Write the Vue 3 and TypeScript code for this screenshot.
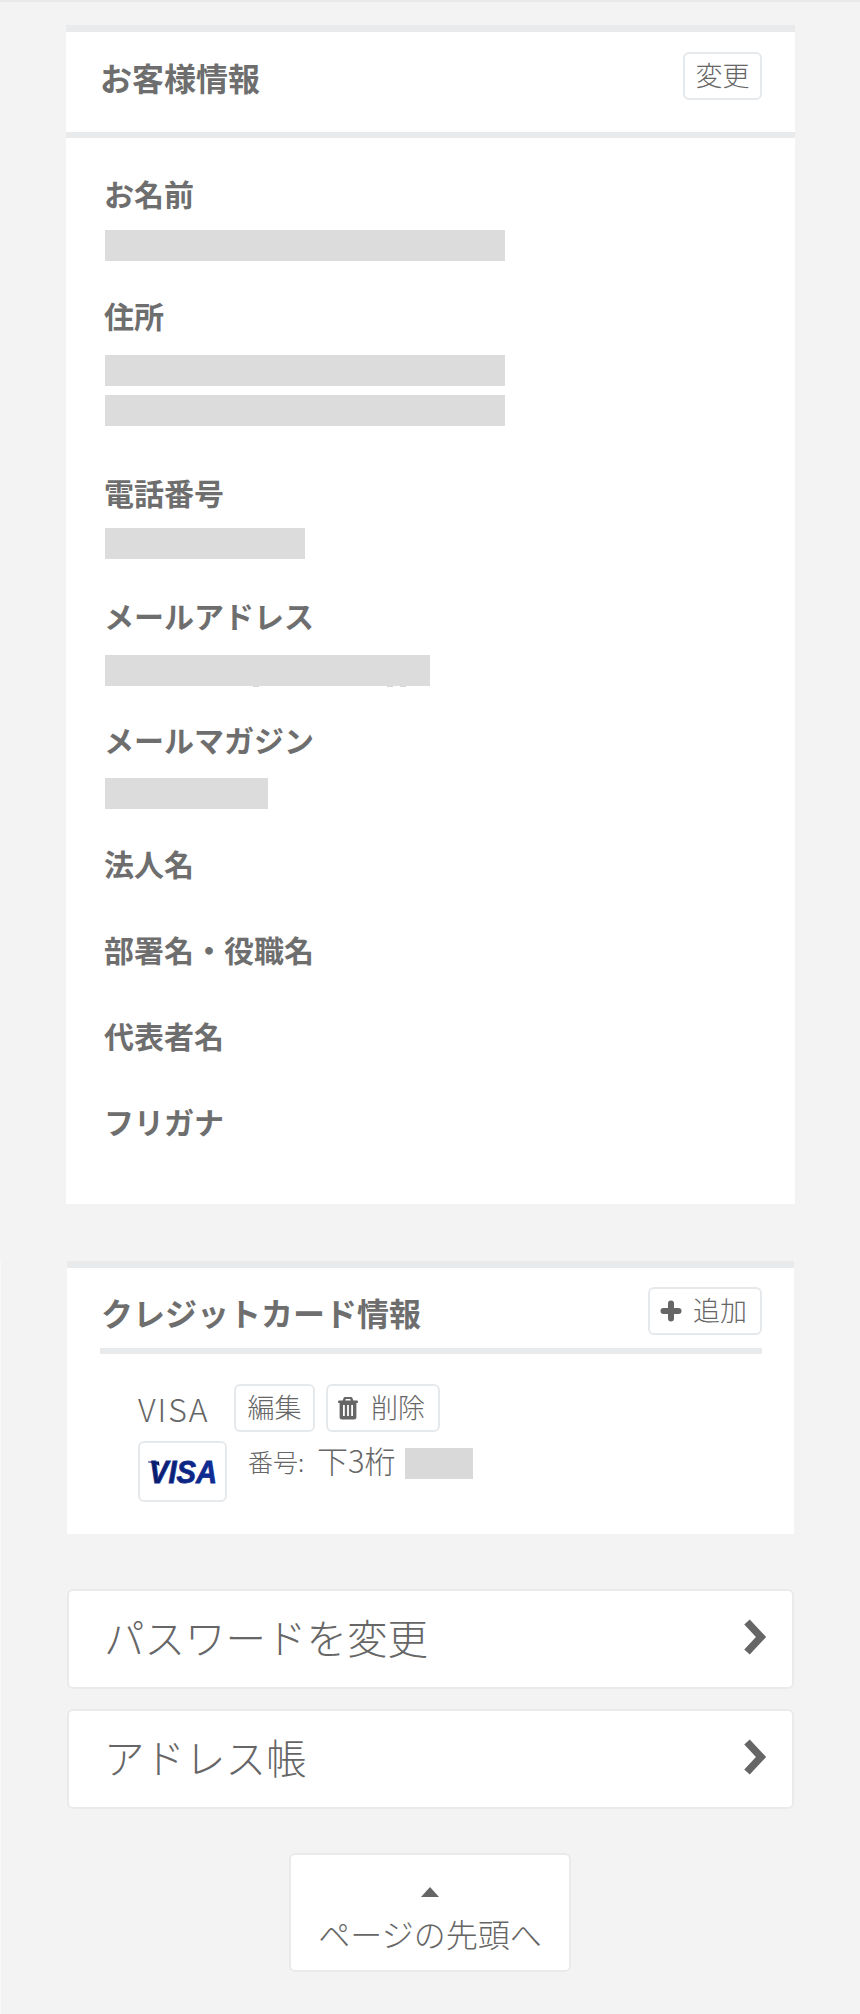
<script setup lang="ts">
interface Field {
  label: string;
  modifier: string;
  values: number[];
}

const fields: Field[] = [
  { label: "お名前", modifier: "field--name", values: [400] },
  { label: "住所", modifier: "field--address", values: [400, 400] },
  { label: "電話番号", modifier: "field--tel", values: [200] },
  { label: "メールアドレス", modifier: "field--mail", values: [325] },
  { label: "メールマガジン", modifier: "field--magazine", values: [163] },
  { label: "法人名", modifier: "field--empty", values: [] },
  { label: "部署名・役職名", modifier: "field--empty", values: [] },
  { label: "代表者名", modifier: "field--empty", values: [] },
  { label: "フリガナ", modifier: "field--empty", values: [] },
];

const links = ["パスワードを変更", "アドレス帳"];
</script>

<template>
  <div class="page">
    <section class="card customer">
      <header class="customer__head">
        <h2 class="title">お客様情報</h2>
        <a class="btn btn--change">変更</a>
      </header>
      <dl class="customer__body">
        <div v-for="field in fields" :key="field.label" class="field" :class="field.modifier">
          <dt class="field__label">{{ field.label }}</dt>
          <dd v-if="field.values.length" class="field__values">
            <span v-for="(width, i) in field.values" :key="i" class="redact" :style="{ width: width + 'px' }" />
          </dd>
        </div>
      </dl>
    </section>

    <section class="card credit">
      <header class="credit__head">
        <h2 class="title">クレジットカード情報</h2>
        <a class="btn btn--add">
          <svg class="icon-plus" viewBox="0 0 22 22" aria-hidden="true">
            <path d="M11 3.500v15M3.500 11h15" />
          </svg>
          <span>追加</span>
        </a>
      </header>
      <div class="credit__row">
        <span class="credit__brand">VISA</span>
        <a class="btn btn--edit">編集</a>
        <a class="btn btn--delete">
          <svg class="icon-trash" viewBox="0 0 20 24" aria-hidden="true">
            <path d="M7 1h6a1.5 1.5 0 0 1 1.4 1L15.400 4.500H19a1 1 0 0 1 0 2.500h-.6v14a2.500 2.500 0 0 1-2.500 2.500H4.100a2.500 2.500 0 0 1-2.500-2.500V7H1a1 1 0 0 1 0-2.500h3.600L5.600 2A1.500 1.500 0 0 1 7 1ZM7.200 4.500h5.600l-.6-1.500H7.800ZM5 9v11h1.800V9ZM9.100 9v11h1.800V9ZM13.200 9v11H15V9Z" fill-rule="evenodd" />
          </svg>
          <span>削除</span>
        </a>
      </div>
      <div class="credit__row credit__row--number">
        <span class="visa-logo">
          <svg viewBox="0 0 72 44" aria-hidden="true">
            <defs>
              <linearGradient id="visaBlue" x1="0" x2="1" y1="0" y2="0">
                <stop offset="0" stop-color="#0a1a66" />
                <stop offset="1" stop-color="#0f2f9c" />
              </linearGradient>
            </defs>
            <path d="M1 11.500H12L12.500 16C9 14 5 12.800 1 12.300Z" fill="#0a1a66" />
            <text x="36" y="33" text-anchor="middle" textLength="68" lengthAdjust="spacingAndGlyphs" class="visa-logo__text" fill="url(#visaBlue)">VISA</text>
          </svg>
        </span>
        <span class="credit__number">
          <span class="credit__key">番号:</span>
          <span class="credit__digits">下3桁</span>
          <span class="redact redact--digits" />
        </span>
      </div>
    </section>

    <nav class="links">
      <a v-for="link in links" :key="link" class="link">
        <span class="link__text">{{ link }}</span>
        <svg class="icon-chevron" viewBox="0 0 26 38" aria-hidden="true">
          <path d="M6 4 20 19 6 34" />
        </svg>
      </a>
    </nav>

    <a class="to-top">
      <span class="to-top__arrow" />
      <span>ページの先頭へ</span>
    </a>
  </div>
</template>

<style>
html,
body {
  margin: 0;
  background: #f3f3f3;
}
</style>

<style scoped>
.page {
  position: relative;
  box-sizing: border-box;
  height: 2014px;
  padding-top: 25px;
  border-top: 2px solid #e8eaec;
  background: #f3f3f3;
  color: #666;
  font-family: "Noto Sans CJK JP", "Noto Sans", sans-serif;
  overflow: hidden;
}

/* thin lighter seam down the left edge */
.page::after {
  content: "";
  position: absolute;
  left: 0;
  top: 1259px;
  bottom: 0;
  width: 1px;
  background: #f8f8f8;
}

.card {
  background: #fff;
  border-top: 7px solid #e8eaec;
}

.customer {
  margin: -2px 65px 0 66px;
  height: 1179px;
  box-sizing: border-box;
}

.customer__head {
  display: flex;
  justify-content: space-between;
  align-items: flex-start;
  box-sizing: border-box;
  height: 106px;
  padding: 20px 33px 0 34px;
  border-bottom: 6px solid #e8eaec;
}

.title {
  margin: 0;
  font-size: 32px;
  line-height: 50px;
  font-weight: 700;
  color: #6e6e6e;
  white-space: nowrap;
}

.btn {
  display: inline-flex;
  align-items: center;
  justify-content: center;
  box-sizing: border-box;
  height: 48px;
  padding-bottom: 4px;
  border: 2px solid #e6e9ec;
  border-radius: 6px;
  background: #fff;
  font-size: 27px;
  font-weight: 300;
  color: #666;
  white-space: nowrap;
}

.btn--change {
  width: 79px;
}

.customer__body {
  margin: 0;
  padding: 38px 0 0 39px;
}

.field__label {
  height: 40px;
  margin-left: -1px;
  font-size: 30px;
  line-height: 34px;
  font-weight: 700;
  color: #6e6e6e;
}

.field__values {
  display: flex;
  flex-direction: column;
  gap: 9px;
  margin: 0;
}

.redact {
  display: block;
  height: 31px;
  background: #dcdcdc;
}

.field--name {
  margin-bottom: 37px;
}
.field--name .field__values {
  margin-top: 14px;
}
.field--address {
  margin-bottom: 49px;
}
.field--address .field__values {
  margin-top: 17px;
}
.field--tel {
  margin-bottom: 39px;
}
.field--tel .field__values {
  margin-top: 13px;
}
.field--mail {
  margin-bottom: 36px;
}
.field--mail .field__values {
  margin-top: 17px;
}
/* descenders of the address peeking out under the redaction */
.field--mail .redact {
  position: relative;
}
.field--mail .redact::after {
  content: "";
  position: absolute;
  left: 148px;
  top: 31px;
  width: 6px;
  height: 1px;
  background: #d6d6d6;
  box-shadow: 134px 0 #d6d6d6, 147px 0 #d6d6d6;
}
.field--magazine {
  margin-bottom: 37px;
}
.field--magazine .field__values {
  margin-top: 16px;
}
.field--empty {
  margin-bottom: 46px;
}

.credit {
  margin: 57px 66px 0 67px;
  height: 273px;
  box-sizing: border-box;
}

.credit__head {
  display: flex;
  justify-content: space-between;
  align-items: flex-start;
  box-sizing: border-box;
  height: 86px;
  margin: 0 32px 0 33px;
  padding: 19px 0 0 1px;
  border-bottom: 6px solid #e8eaec;
}

.credit .title {
  line-height: 46px;
  padding-top: 2px;
}

.btn--add {
  justify-content: flex-start;
  width: 114px;
  padding-left: 10px;
  gap: 11px;
}

.icon-plus {
  flex: none;
  width: 22px;
  height: 22px;
  margin-top: 4px;
  fill: none;
  stroke: #666;
  stroke-width: 6;
  stroke-linecap: round;
}

.credit__row {
  display: flex;
  align-items: flex-start;
  margin: 30px 0 0 71px;
}

.credit__brand {
  width: 97px;
  font-size: 32px;
  line-height: 48px;
  font-weight: 300;
  letter-spacing: 2px;
  color: #666;
}

.btn--edit {
  width: 81px;
  margin-left: -1px;
}

.btn--delete {
  justify-content: flex-start;
  width: 114px;
  margin-left: 11px;
  padding-left: 10px;
  gap: 13px;
}

.icon-trash {
  flex: none;
  width: 20px;
  height: 24px;
  margin-top: 4px;
  fill: #666;
}

.credit__row--number {
  margin-top: 9px;
}

.visa-logo {
  display: flex;
  align-items: center;
  justify-content: center;
  box-sizing: border-box;
  width: 89px;
  height: 61px;
  border: 2px solid #e6e9ec;
  border-radius: 6px;
}

.visa-logo svg {
  width: 72px;
  height: 44px;
}

.visa-logo__text {
  font-family: "Liberation Sans", sans-serif;
  font-size: 31px;
  font-weight: 700;
  font-style: italic;
  stroke: #0e2a8c;
  stroke-width: 0.8px;
}

.credit__number {
  display: flex;
  align-items: flex-start;
  margin: 7px 0 0 21px;
  color: #666;
  font-weight: 300;
}

.credit__key {
  width: 69px;
  font-size: 25px;
  line-height: 26px;
  white-space: nowrap;
}

.credit__digits {
  width: 88px;
  font-size: 31px;
  line-height: 24px;
  white-space: nowrap;
}

.redact--digits {
  width: 68px;
  background: #d9d9d9;
}

.links {
  display: flex;
  flex-direction: column;
  gap: 20px;
  margin: 55px 66px 0 67px;
}

.link {
  display: flex;
  align-items: center;
  justify-content: space-between;
  box-sizing: border-box;
  height: 100px;
  padding: 0 25px 0 35px;
  border: 2px solid #e8eaec;
  border-radius: 6px;
  background: #fff;
  font-size: 40.5px;
  font-weight: 300;
  color: #666;
}

.link__text {
  margin-bottom: 6px;
}

.icon-chevron {
  width: 26px;
  height: 38px;
  margin-bottom: 4px;
  fill: none;
  stroke: #666;
  stroke-width: 7.5;
}

.to-top {
  display: flex;
  flex-direction: column;
  align-items: center;
  box-sizing: border-box;
  width: 282px;
  height: 119px;
  margin: 44px auto 0;
  padding-top: 32px;
  border: 2px solid #e8eaec;
  border-radius: 6px;
  background: #fff;
  font-size: 32px;
  line-height: 44px;
  font-weight: 300;
  color: #666;
}

.to-top__arrow {
  width: 0;
  height: 0;
  margin-bottom: 14px;
  border-left: 9px solid transparent;
  border-right: 9px solid transparent;
  border-bottom: 10px solid #666;
}
</style>
